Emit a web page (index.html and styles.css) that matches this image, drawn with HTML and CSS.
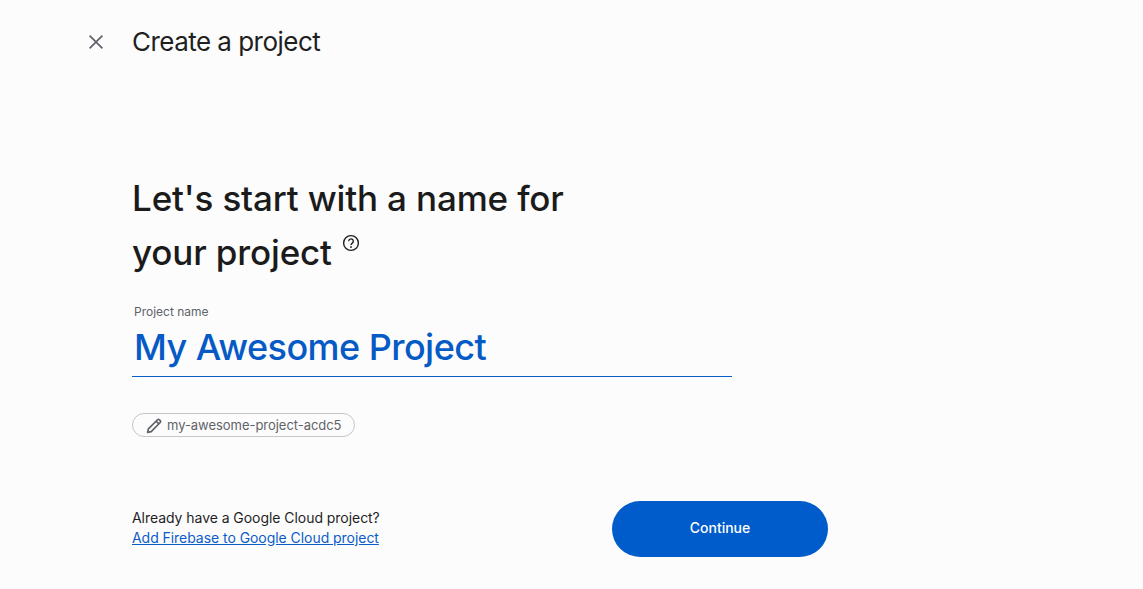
FILE: index.html
```html
<!DOCTYPE html>
<html lang="en">
<head>
<meta charset="utf-8">
<title>Create a project</title>
<link rel="stylesheet" href="styles.css">
</head>
<body>
<header class="topbar">
  <button class="close" aria-label="Close">
    <svg viewBox="0 0 24 24" width="24" height="24"><path d="M5.6 5.6 18.4 18.4M18.4 5.6 5.6 18.4" fill="none" stroke="#5f6368" stroke-width="1.7"/></svg>
  </button>
  <h1 class="title">Create a project</h1>
</header>
<main class="content">
  <h2 class="headline">Let's start with a name for<br>your project<svg class="help" viewBox="0 0 18 18" width="18" height="18"><circle cx="9" cy="9" r="7.4" fill="none" stroke="#1f1f1f" stroke-width="1.4"/><path d="M6.7 7.2a2.3 2.3 0 1 1 3.600 1.900c-.9.600-1.300 1-1.300 2" fill="none" stroke="#1f1f1f" stroke-width="1.4"/><circle cx="9" cy="13" r=".9" fill="#1f1f1f"/></svg></h2>
  <div class="field">
    <label class="field-label">Project name</label>
    <div class="field-value">My Awesome Project</div>
  </div>
  <div class="chip">
    <svg viewBox="0 0 16 16" width="17" height="17"><path d="M1.500 14.500l.8-3.400L10.800 2.600a1.300 1.300 0 0 1 1.800 0l.8.800a1.300 1.300 0 0 1 0 1.800L4.900 13.700z" fill="none" stroke="#5f6368" stroke-width="1.600" stroke-linejoin="round"/><path d="M9.500 3.900l2.800 2.800" stroke="#5f6368" stroke-width="1.600"/></svg>
    <span>my-awesome-project-acdc5</span>
  </div>
  <div class="footer">
    <div class="existing">
      <div>Already have a Google Cloud project?</div>
      <a class="link" href="#">Add Firebase to Google Cloud project</a>
    </div>
    <button class="continue">Continue</button>
  </div>
</main>
</body>
</html>
```

FILE: styles.css
```css
* { box-sizing: border-box; }
html, body { margin: 0; height: 100%; }
body {
  background: #fcfcfd;
  color: #1f1f1f;
  font-family: Inter, Roboto, sans-serif;
  overflow: hidden;
}
.topbar {
  display: flex;
  align-items: center;
  height: 84px;
  padding-left: 84px;
  gap: 24px;
}
.close {
  width: 24px;
  height: 24px;
  padding: 0;
  border: 0;
  background: none;
  display: block;
}
.close svg { display: block; }
.title {
  margin: 0;
  font-size: 26px;
  font-weight: 400;
  line-height: 36px;
  letter-spacing: -0.53px;
}
.content {
  margin-left: 132px;
  width: 696px;
  padding-top: 87px;
}
.headline {
  margin: 0;
  font-size: 35px;
  font-weight: 500;
  line-height: 54px;
  letter-spacing: -0.15px;
  color: #1b1b1b;
}
.help {
  margin-left: 10px;
  vertical-align: 13px;
}
.field {
  width: 600px;
  margin-top: 25px;
  height: 73px;
  border-bottom: 1px solid #0b5cc8;
  padding-left: 2px;
}
.field-label {
  display: block;
  font-size: 12px;
  line-height: 16px;
  color: #5f6368;
}
.field-value {
  font-size: 36px;
  line-height: 54px;
  font-weight: 500;
  letter-spacing: -0.55px;
  color: #055ac6;
}
.chip {
  display: inline-flex;
  align-items: center;
  margin-top: 36px;
  height: 24px;
  width: 223px;
  padding-left: 13px;
  gap: 4px;
  border: 1px solid #c4c7c5;
  border-radius: 12px;
  font-size: 13px;
  letter-spacing: -0.04px;
  color: #5f6368;
}
.footer {
  display: flex;
  justify-content: space-between;
  align-items: center;
  margin-top: 63px;
}
.existing {
  font-size: 14px;
  line-height: 20px;
  letter-spacing: -0.05px;
  padding-bottom: 2px;
}
.link { color: #0b5cc8; }
.continue {
  width: 216px;
  height: 56px;
  padding-bottom: 4px;
  border: 0;
  border-radius: 28px;
  background: #005ccb;
  color: #fff;
  font-family: inherit;
  font-size: 14px;
  font-weight: 450;
}
```
